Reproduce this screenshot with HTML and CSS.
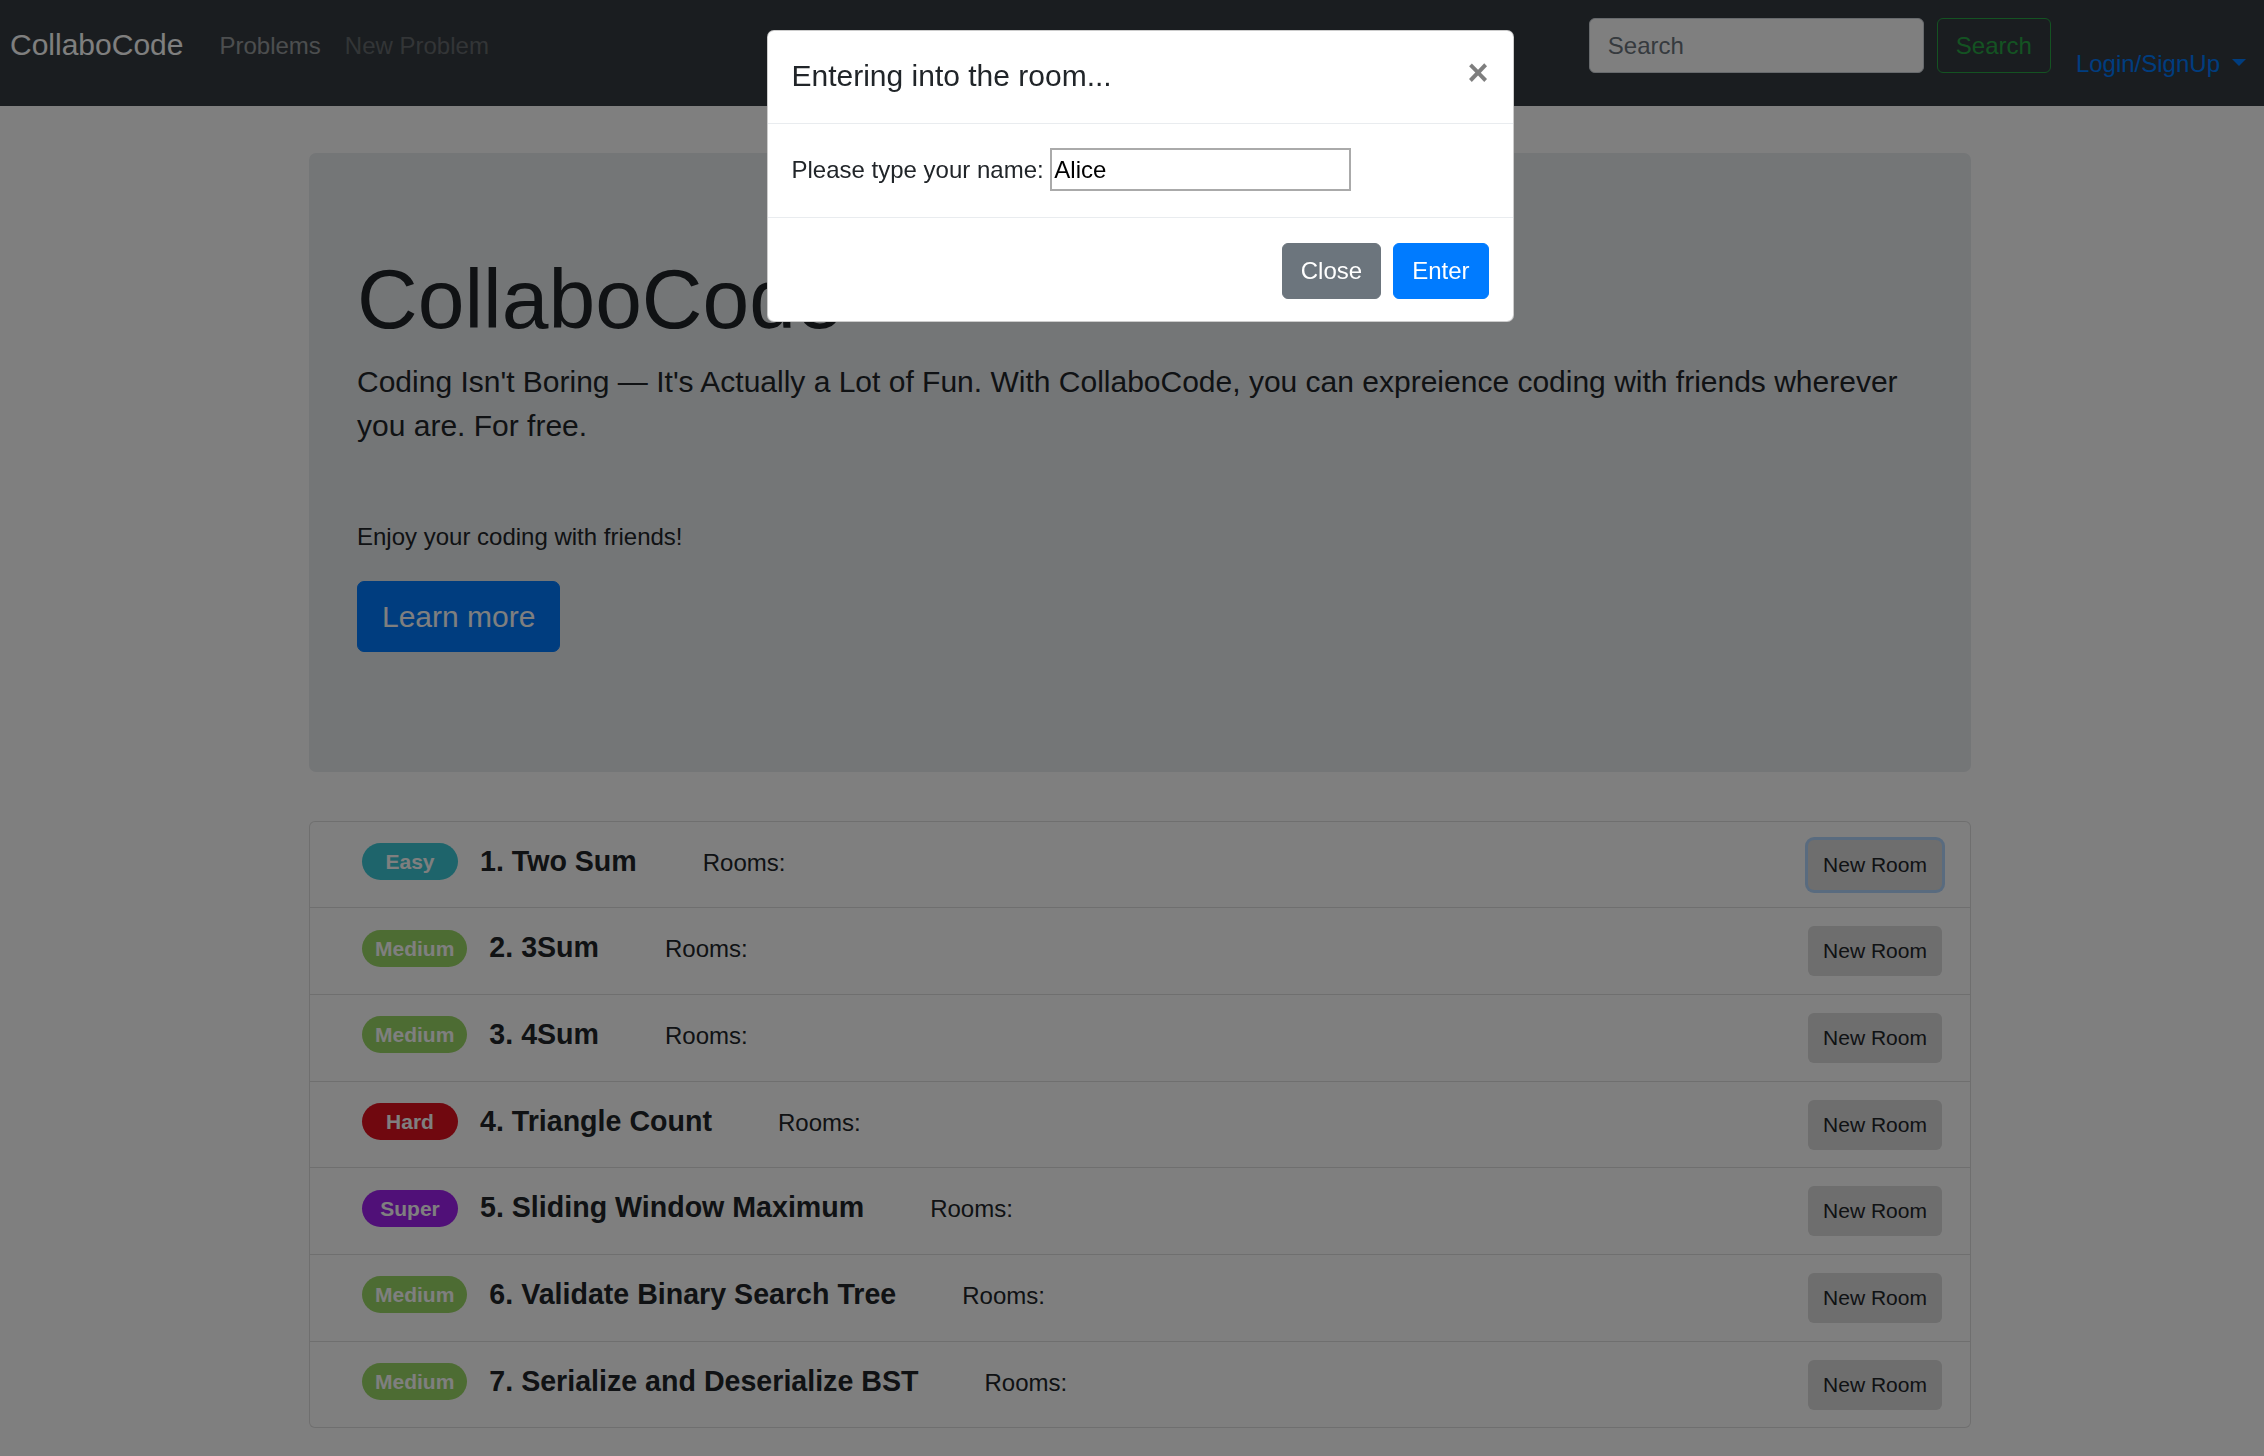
FILE: index.html
```html
<!DOCTYPE html>
<html lang="en">
<head>
<meta charset="utf-8">
<title>CollaboCode</title>
<link rel="stylesheet" href="styles.css">
</head>
<body>
<nav class="navbar">
  <a class="brand" href="#">CollaboCode</a>
  <ul class="nav">
    <li><a class="nav-link active" href="#">Problems</a></li>
    <li><a class="nav-link disabled" href="#">New Problem</a></li>
  </ul>
  <form class="search">
    <input class="search-input" type="text" placeholder="Search">
    <button class="search-btn" type="button">Search</button>
  </form>
  <div class="login"><a class="login-link" href="#">Login/SignUp<span class="caret"></span></a></div>
</nav>

<main class="page">
  <div class="container">
    <section class="jumbotron">
      <h1 class="display">CollaboCode</h1>
      <p class="lead">Coding Isn't Boring — It's Actually a Lot of Fun. With CollaboCode, you can expreience coding with friends wherever you are. For free.</p>
      <hr class="divider">
      <p class="enjoy">Enjoy your coding with friends!</p>
      <p class="lead-btn"><a class="btn-lg" href="#">Learn more</a></p>
    </section>

    <ul class="list-group">
      <li class="item">
        <span class="badge easy">Easy</span>
        <span class="title">1. Two Sum</span>
        <span class="rooms">Rooms:</span>
        <button class="new-room focused" type="button">New Room</button>
      </li>
      <li class="item">
        <span class="badge medium">Medium</span>
        <span class="title">2. 3Sum</span>
        <span class="rooms">Rooms:</span>
        <button class="new-room" type="button">New Room</button>
      </li>
      <li class="item">
        <span class="badge medium">Medium</span>
        <span class="title">3. 4Sum</span>
        <span class="rooms">Rooms:</span>
        <button class="new-room" type="button">New Room</button>
      </li>
      <li class="item">
        <span class="badge hard">Hard</span>
        <span class="title">4. Triangle Count</span>
        <span class="rooms">Rooms:</span>
        <button class="new-room" type="button">New Room</button>
      </li>
      <li class="item">
        <span class="badge super">Super</span>
        <span class="title">5. Sliding Window Maximum</span>
        <span class="rooms">Rooms:</span>
        <button class="new-room" type="button">New Room</button>
      </li>
      <li class="item">
        <span class="badge medium">Medium</span>
        <span class="title">6. Validate Binary Search Tree</span>
        <span class="rooms">Rooms:</span>
        <button class="new-room" type="button">New Room</button>
      </li>
      <li class="item">
        <span class="badge medium">Medium</span>
        <span class="title">7. Serialize and Deserialize BST</span>
        <span class="rooms">Rooms:</span>
        <button class="new-room" type="button">New Room</button>
      </li>
    </ul>
  </div>
</main>

<div class="backdrop"></div>
<div class="modal">
  <div class="modal-content">
    <div class="modal-header">
      <h5 class="modal-title">Entering into the room...</h5>
      <button class="close" type="button">×</button>
    </div>
    <div class="modal-body">
      <label class="name-label">Please type your name: <input class="name-input" type="text" value="Alice"></label>
    </div>
    <div class="modal-footer">
      <button class="btn btn-secondary" type="button">Close</button>
      <button class="btn btn-primary" type="button">Enter</button>
    </div>
  </div>
</div>
</body>
</html>
```

FILE: styles.css
```css
* { box-sizing: border-box; }

html, body {
  margin: 0;
  padding: 0;
}

body {
  font-family: "Liberation Sans", Arial, sans-serif;
  font-size: 24px;
  line-height: 36px;
  color: #212529;
  background: #fff;
  width: 2264px;
  min-height: 1456px;
}

a { text-decoration: none; }

/* ---------- navbar ---------- */
.navbar {
  display: flex;
  align-items: flex-start;
  height: 106px;
  background: #343a40;
  padding: 0 6px 0 10px;
}

.brand {
  font-size: 30px;
  line-height: 45px;
  margin-top: 22px;
  margin-right: 24px;
  color: #fff;
}

.nav {
  display: flex;
  list-style: none;
  margin: 16px 0 0;
  padding: 0;
}

.nav-link {
  display: block;
  padding: 12px;
  line-height: 36px;
  color: rgba(255, 255, 255, .5);
}

.nav-link.disabled { color: rgba(255, 255, 255, .25); }

.search {
  display: flex;
  margin: 18px 0 0 auto;
}

.search-input {
  width: 335px;
  height: 55px;
  padding: 9px 18px;
  font: inherit;
  color: #495057;
  background: #fff;
  border: 1.5px solid #ced4da;
  border-radius: 6px;
}

.search-input::placeholder { color: #6c757d; }

.search-btn {
  height: 55px;
  margin-left: 13px;
  padding: 0 18px;
  font: inherit;
  color: #28a745;
  background: transparent;
  border: 1.5px solid #28a745;
  border-radius: 6px;
}

.login {
  margin: 34px 0 0 13px;
}

.login-link {
  display: block;
  padding: 12px;
  line-height: 36px;
  color: #007bff;
}

.caret {
  display: inline-block;
  margin-left: 12px;
  vertical-align: 6px;
  border-top: 7.2px solid;
  border-left: 7.2px solid transparent;
  border-right: 7.2px solid transparent;
}

/* ---------- page ---------- */
.page {
  padding-left: 16px;
}

.container {
  width: 1662px;
  margin: 47px auto 0;
}

.jumbotron {
  background: #e9ecef;
  border-radius: 7px;
  padding: 96px 48px;
  margin-bottom: 49px;
}

.display {
  margin: 0 0 10.5px;
  font-size: 84px;
  font-weight: 300;
  line-height: 100.8px;
}

.lead {
  margin: 0 0 24px;
  font-size: 30px;
  font-weight: 300;
  line-height: 43.5px;
}

.divider {
  margin: 36px 0;
  height: 0;
  border: 0;
}

.enjoy {
  margin: 0 0 25.5px;
}

.lead-btn {
  margin: 0 0 24px;
  font-size: 30px;
  line-height: 45px;
}

.btn-lg {
  display: inline-block;
  vertical-align: top;
  padding: 12px 24px;
  font-size: 30px;
  line-height: 45px;
  color: #fff;
  background: #007bff;
  border: 1.5px solid #007bff;
  border-radius: 7px;
}

/* ---------- list ---------- */
.list-group {
  list-style: none;
  margin: 0;
  padding: 0;
}

.item {
  display: flex;
  align-items: center;
  height: 87.67px;
  margin-bottom: -1px;
  padding: 0 28px 0 52px;
  background: #fff;
  border: 1px solid rgba(0, 0, 0, .125);
}

.item:first-child { border-radius: 6px 6px 0 0; }
.item:last-child { border-radius: 0 0 6px 6px; margin-bottom: 0; }

.badge {
  display: inline-block;
  min-width: 96px;
  height: 37px;
  margin-bottom: 6px;
  padding: 0 13px;
  font-size: 21px;
  font-weight: 700;
  line-height: 37px;
  text-align: center;
  color: #fff;
  border-radius: 19px;
}

.easy { background: #3cc9d6; }
.medium { background: #9bd866; }
.hard { background: #e0101e; }
.super { background: #a020f0; }

.title {
  margin: 0 0 7px 22px;
  font-size: 28.6px;
  font-weight: 700;
  line-height: 28.6px;
}

.rooms {
  margin: 0 0 4px 66px;
  line-height: 24px;
}

.new-room {
  margin-left: auto;
  width: 134px;
  height: 50px;
  padding: 0;
  font-family: inherit;
  font-size: 21px;
  color: #212529;
  background: #dcdcdc;
  border: 0;
  border-radius: 6px;
}

.new-room.focused {
  box-shadow: 0 0 0 3px rgba(0, 123, 255, .3);
}

/* ---------- modal ---------- */
.backdrop {
  position: fixed;
  inset: 0;
  background: rgba(0, 0, 0, .5);
  z-index: 10;
}

.modal {
  position: fixed;
  inset: 0;
  z-index: 20;
  padding-left: 16px;
}

.modal-content {
  width: 747px;
  margin: 30px auto 0;
  background: #fff;
  border: 1px solid rgba(0, 0, 0, .2);
  border-radius: 7px;
}

.modal-header {
  display: flex;
  align-items: flex-start;
  padding: 21.5px 24px 25.5px;
  border-bottom: 1px solid #e9ecef;
}

.modal-title {
  margin: 0;
  font-size: 30px;
  font-weight: 400;
  line-height: 45px;
}

.close {
  margin: -22px -24px -24px auto;
  padding: 24px;
  font-family: inherit;
  font-size: 36px;
  font-weight: 700;
  line-height: 1;
  color: #000;
  opacity: .5;
  background: transparent;
  border: 0;
}

.modal-body {
  padding: 24px 24px 25.5px;
}

.name-label {
  display: block;
  line-height: 36px;
}

.name-input {
  width: 301px;
  height: 43px;
  padding: 1px 2px;
  font: inherit;
  line-height: 36px;
  color: #000;
  border: 2px solid #aaa;
  border-radius: 0;
  vertical-align: baseline;
}

.modal-footer {
  display: flex;
  justify-content: flex-end;
  padding: 19px 18px 16px;
  border-top: 1px solid #e9ecef;
}

.btn {
  margin: 6px;
  padding: 9px 18px;
  font-family: inherit;
  font-size: 24px;
  line-height: 36px;
  color: #fff;
  border-radius: 6px;
}

.btn-secondary {
  background: #6c757d;
  border: 1px solid #6c757d;
}

.btn-primary {
  background: #007bff;
  border: 1px solid #007bff;
}
```
